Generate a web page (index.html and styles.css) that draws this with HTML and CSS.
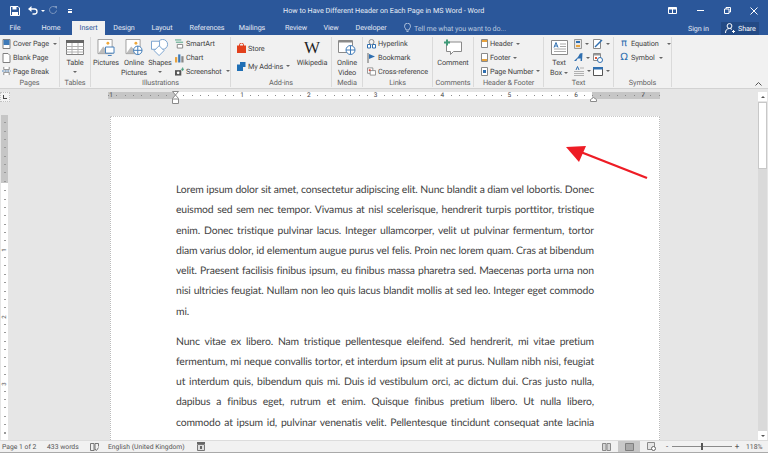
FILE: index.html
```html
<!DOCTYPE html>
<html lang="en">

<head>
    <meta charset="UTF-8">
    <title>How to Have Different Header on Each Page in MS Word - Word</title>
    <link rel="stylesheet" href="styles.css">
</head>

<body>
    <!-- Title bar -->
    <div class="titlebar">
        <div class="qat">
            <svg class="qat-save" width="10" height="10" viewBox="0 0 10 10"><path d="M.5.500h7.500l1.500 1.500v7.500h-9z" fill="none" stroke="#fff"/><path d="M2.500 1h4v2.500h-4zM2 6h6v3.500h-6z" fill="#fff"/></svg>
            <svg class="qat-undo" width="10" height="9" viewBox="0 0 10 9"><path d="M1 3h5.500a2.500 2.500 0 0 1 0 5h-2" fill="none" stroke="#fff" stroke-width="1.300"/><path d="M3.500 0v6l-3.500-3z" fill="#fff"/></svg>
            <span class="qat-caret"></span>
            <svg class="qat-redo" width="9" height="9" viewBox="0 0 9 9"><path d="M6.500 1.500a3.500 3.500 0 1 0 1 3" fill="none" stroke="#7d98c0" stroke-width="1"/><path d="M5 0h3v3z" fill="#7d98c0"/></svg>
            <span class="qat-custom"></span>
        </div>
        <div class="doc-title">How to Have Different Header on Each Page in MS Word - Word</div>
        <div class="window-btns">
            <svg class="win-display" width="9" height="7" viewBox="0 0 9 7"><path d="M.5.500h8v6h-8zM4.500.5v6" fill="none" stroke="#fff"/><path d="M.5.500h8v2h-8z" fill="#fff"/></svg>
            <span class="win-min"></span>
            <svg class="win-restore" width="7" height="7" viewBox="0 0 7 7"><path d="M.5 2h4.500v4.500h-4.500zM2 2v-1.500h4.500v4.500h-1.500" fill="none" stroke="#fff"/></svg>
            <svg width="8" height="8" viewBox="0 0 8 8"><path d="M.5.500l7 7M7.500.5l-7 7" stroke="#fff" fill="none"/></svg>
        </div>
    </div>

    <!-- Tabs -->
    <div class="tabs">
        <span class="tab tab-file">File</span>
        <span class="tab tab-home">Home</span>
        <span class="tab tab-active">Insert</span>
        <span class="tab tab-design">Design</span>
        <span class="tab tab-layout">Layout</span>
        <span class="tab tab-refs">References</span>
        <span class="tab tab-mail">Mailings</span>
        <span class="tab tab-review">Review</span>
        <span class="tab tab-view">View</span>
        <span class="tab tab-dev">Developer</span>
        <svg class="bulb" width="7" height="10" viewBox="0 0 7 10"><path d="M2 7c0-1.500-1.500-2-1.500-3.800a3 3 0 0 1 6 0c0 1.800-1.500 2.300-1.500 3.800zM2.500 8.500h2" fill="none" stroke="#c9d5e8" stroke-width=".8"/></svg>
        <span class="tell">Tell me what you want to do...</span>
        <span class="signin">Sign in</span>
        <span class="share">
            <svg width="10" height="10" viewBox="0 0 10 10"><circle cx="4.500" cy="3" r="2.400" fill="none" stroke="#fff"/><path d="M.5 10c0-3 1.500-4.500 4-4.500 1 0 2 .3 2.500 1M7 8.500h3M8.500 7v3" fill="none" stroke="#fff"/></svg>
            Share
        </span>
    </div>

    <!-- Ribbon -->
    <div class="ribbon">
        <div class="group g-pages">
            <div class="group-body">
                <div class="stack stack-pages">
                    <div class="row"><svg width="8" height="10" viewBox="0 0 8 10"><path d="M.5.500h7v9h-7z" fill="#fff" stroke="#7f7f7f"/><path d="M1 1h6v5h-6z" fill="#3e7ab8"/></svg>Cover Page<span class="caret"></span></div>
                    <div class="row"><svg width="8" height="10" viewBox="0 0 8 10"><path d="M.5.500h5l2 2v7h-7z" fill="#fff" stroke="#7f7f7f"/></svg>Blank Page</div>
                    <div class="row"><svg width="10" height="10" viewBox="0 0 10 10"><path d="M2 .5v3h6v-3M2 9.500v-3h6v3" fill="#fff" stroke="#7f7f7f"/><path d="M0 5h10" stroke="#3e7ab8" stroke-dasharray="2 1"/></svg>Page Break</div>
                </div>
            </div>
            <div class="group-label">Pages</div>
        </div>

        <div class="group g-tables">
            <div class="group-body big-wrap">
                <div class="big">
                    <svg width="18" height="15" viewBox="0 0 18 15"><path d="M.5.500h17v14h-17z" fill="#fff" stroke="#7f7f7f"/><path d="M0 0h18v3h-18z" fill="#666"/><path d="M.5 6.500h17M.5 9.500h17M.5 12h17M6 3v11M12 3v11" stroke="#b0b0b0" fill="none"/></svg>
                    <span class="big-text">Table</span>
                    <span class="caret"></span>
                </div>
            </div>
            <div class="group-label">Tables</div>
        </div>

        <div class="group g-illus">
            <div class="group-body big-wrap">
                <div class="big big-pics">
                    <svg width="18" height="18" viewBox="0 0 18 18"><path d="M.5.500h15v15h-15z" fill="#fff" stroke="#9a9a9a"/><circle cx="11" cy="4.500" r="1.500" fill="#f0a83c"/><path d="M1 15l5-7 4 4 2-2 3 5z" fill="#bcbcbc"/><path d="M8.500 8.500h9v6.500h-9z" fill="#fff" stroke="#3e7ab8"/><path d="M11 17.500h4" stroke="#3e7ab8"/></svg>
                    <span class="big-text">Pictures</span>
                </div>
                <div class="big big-online">
                    <svg width="18" height="18" viewBox="0 0 18 18"><path d="M.5.500h15v15h-15z" fill="#fff" stroke="#9a9a9a"/><circle cx="11" cy="4.500" r="1.500" fill="#f0a83c"/><path d="M1 15l5-7 4 4 2-2 3 5z" fill="#bcbcbc"/><circle cx="13" cy="12" r="4.500" fill="#fff" stroke="#3e7ab8"/><path d="M8.500 12h9M13 7.500v9" stroke="#3e7ab8"/></svg>
                    <span class="big-text">Online</span>
                    <span class="big-text">Pictures</span>
                </div>
                <div class="big big-shapes">
                    <svg width="20" height="19" viewBox="0 0 20 19"><circle cx="13" cy="6" r="5.500" fill="#fff" stroke="#6f9ccb"/><path d="M.5 2.500h9v9h-9z" fill="#fff" stroke="#6f9ccb"/><path d="M9 7.500l5.500 5.500-5.500 5.500-5.500-5.500z" fill="#fff" stroke="#6f9ccb"/></svg>
                    <span class="big-text">Shapes</span>
                    <span class="caret"></span>
                </div>
                <div class="stack stack-illus">
                    <div class="row"><svg width="10" height="10" viewBox="0 0 10 10"><path d="M0 .5h7M1 3h8" stroke="#3f9a78"/><path d="M2.500 5.500h6v4h-6z" fill="#fff" stroke="#7f7f7f"/></svg>SmartArt</div>
                    <div class="row"><svg width="10" height="10" viewBox="0 0 10 10"><path d="M0 4h2.500v6h-2.500z" fill="#e8a33d"/><path d="M3.500 1h2.500v9h-2.500z" fill="#3e7ab8"/><path d="M7 3h2.500v7h-2.500z" fill="#888"/></svg>Chart</div>
                    <div class="row"><svg width="10" height="9" viewBox="0 0 10 9"><path d="M0 3h7v6h-7z" fill="#555"/><circle cx="3.500" cy="6" r="1.500" fill="#fff"/><path d="M8.500 0v4M6.500 2h4" stroke="#3f9a78"/></svg>Screenshot<span class="caret"></span></div>
                </div>
            </div>
            <div class="group-label">Illustrations</div>
        </div>

        <div class="group g-addins">
            <div class="group-body">
                <div class="stack stack-addins">
                    <div class="row"><svg width="9" height="10" viewBox="0 0 9 10"><path d="M0 2.500h9v7.500h-9z" fill="#e2401c"/><path d="M2.500 3v-1.200a2 1.800 0 0 1 4 0v1.200" fill="none" stroke="#e2401c"/></svg>Store</div>
                    <div class="row"><svg width="9" height="10" viewBox="0 0 9 10"><path d="M0 3.500h6v6.500h-6z" fill="#1f6fb5"/><path d="M3 1h5.500v5h-5.500z" fill="#1f6fb5"/></svg>My Add-ins<span class="caret caret-far"></span></div>
                </div>
                <div class="big big-wiki">
                    <span class="wiki-w">W</span>
                    <span class="big-text">Wikipedia</span>
                </div>
            </div>
            <div class="group-label">Add-ins</div>
        </div>

        <div class="group g-media">
            <div class="group-body big-wrap">
                <div class="big">
                    <svg width="18" height="17" viewBox="0 0 18 17"><path d="M.5 1.500h14v12h-14z" fill="#fff" stroke="#8a8a8a"/><path d="M1 1h13v2.500h-13z" fill="#8a8a8a"/><circle cx="12.500" cy="11" r="4.500" fill="#fff" stroke="#3e7ab8"/><path d="M8 11h9M12.500 6.500v9" stroke="#3e7ab8"/></svg>
                    <span class="big-text">Online</span>
                    <span class="big-text">Video</span>
                </div>
            </div>
            <div class="group-label">Media</div>
        </div>

        <div class="group g-links">
            <div class="group-body">
                <div class="stack stack-links">
                    <div class="row"><svg width="9" height="10" viewBox="0 0 9 10"><circle cx="4.500" cy="3" r="2.500" fill="none" stroke="#8a8a8a"/><path d="M.5 5.500h3v3.500h-3zM5.500 5.500h3v3.500h-3z" fill="#fff" stroke="#2f6fb0"/></svg>Hyperlink</div>
                    <div class="row"><svg width="9" height="10" viewBox="0 0 9 10"><path d="M1 0v10" stroke="#666"/><path d="M2 1l6 2.500-6 2.500z" fill="#2f6fb0"/></svg>Bookmark</div>
                    <div class="row"><svg width="10" height="9" viewBox="0 0 10 9"><path d="M.5.500h6v6h-6z" fill="#fff" stroke="#8a8a8a"/><path d="M3.500 3.500h6v5h-6z" fill="#fff" stroke="#8a8a8a"/><path d="M2 2h2v2h-2z" fill="#d9483b"/></svg>Cross-reference</div>
                </div>
            </div>
            <div class="group-label">Links</div>
        </div>

        <div class="group g-comments">
            <div class="group-body big-wrap">
                <div class="big">
                    <svg width="18" height="16" viewBox="0 0 18 16"><path d="M2.500 2.500h15v9.500h-8l-3 3v-3h-4z" fill="#fff" stroke="#8a8a8a"/><path d="M0 3h6M3 0v6" stroke="#3f9a78" stroke-width="2"/></svg>
                    <span class="big-text">Comment</span>
                </div>
            </div>
            <div class="group-label">Comments</div>
        </div>

        <div class="group g-hf">
            <div class="group-body">
                <div class="stack stack-hf">
                    <div class="row"><svg width="7" height="9" viewBox="0 0 7 9"><path d="M.5.500h6v8h-6z" fill="#fff" stroke="#8a8a8a"/><path d="M1 1h5v2h-5z" fill="#e8a33d"/></svg>Header<span class="caret"></span></div>
                    <div class="row"><svg width="7" height="9" viewBox="0 0 7 9"><path d="M.5.500h6v8h-6z" fill="#fff" stroke="#8a8a8a"/><path d="M1 6h5v2h-5z" fill="#e8a33d"/></svg>Footer<span class="caret"></span></div>
                    <div class="row"><svg width="7" height="9" viewBox="0 0 7 9"><path d="M.5.500h6v8h-6z" fill="#fff" stroke="#8a8a8a"/><path d="M2 3h3v3h-3z" fill="#2f6fb0"/></svg>Page Number<span class="caret"></span></div>
                </div>
            </div>
            <div class="group-label">Header &amp; Footer</div>
        </div>

        <div class="group g-text">
            <div class="group-body">
                <div class="big big-textbox">
                    <svg width="17" height="15" viewBox="0 0 17 15"><path d="M.5.500h16v14h-16z" fill="#fff" stroke="#8a8a8a"/><path d="M9 4h6M9 6.500h6M3 9h12M3 11.500h12" stroke="#a8a8a8"/><path d="M3 7.500l2-5 2 5M3.800 6h2.400" fill="none" stroke="#2f6fb0"/></svg>
                    <span class="big-text">Text</span>
                    <span class="big-text">Box<span class="caret"></span></span>
                </div>
                <div class="text-tools">
                    <div class="tool"><svg width="8" height="10" viewBox="0 0 8 10"><path d="M.5.500h7v9h-7z" fill="#e6e6e6" stroke="#999"/><path d="M2 2h4v2h-4z" fill="#2f6fb0"/><path d="M2 6h4v2h-4z" fill="#e8a33d"/></svg><span class="caret"></span></div>
                    <div class="tool"><svg width="10" height="10" viewBox="0 0 10 10"><path d="M.5.500h7v9h-7z" fill="#fff" stroke="#8a8a8a"/><path d="M2 8l7-7" stroke="#2f6fb0" stroke-width="1.500"/></svg><span class="caret"></span></div>
                    <div class="tool"><svg width="9" height="9" viewBox="0 0 9 9"><path d="M0 8l4-4 2-3.500 2.500-.5-.5 8-1.500 0 .2-2.500-3 0-1.500 2.500z" fill="#2f6fb0"/></svg><span class="caret"></span></div>
                    <div class="tool"><svg width="10" height="10" viewBox="0 0 10 10"><path d="M.5.500h7v7h-7z" fill="#fff" stroke="#8a8a8a"/><path d="M1 1h6v1.500h-6z" fill="#999"/><path d="M2 4h2v2h-2z" fill="#d9583b"/><circle cx="7" cy="7" r="2.500" fill="#fff" stroke="#2f6fb0"/></svg></div>
                    <div class="tool"><svg width="10" height="10" viewBox="0 0 10 10"><path d="M2 4l1.500-3.500 1.500 3.500" fill="none" stroke="#2f6fb0"/><path d="M6 2h4M0 5.500h10M0 7.500h10M0 9.500h10" stroke="#b0b0b0"/></svg><span class="caret"></span></div>
                    <div class="tool"><svg width="10" height="9" viewBox="0 0 10 9"><path d="M.5.500h9v8h-9z" fill="#fff" stroke="#555"/><path d="M0 0h10v2.500h-10z" fill="#2f6fb0"/></svg><span class="caret"></span></div>
                </div>
            </div>
            <div class="group-label">Text</div>
        </div>

        <div class="group g-symbols">
            <div class="group-body">
                <div class="stack stack-symbols">
                    <div class="row"><span class="sym">π</span>Equation<span class="caret caret-eq"></span></div>
                    <div class="row"><span class="sym">Ω</span>Symbol<span class="caret"></span></div>
                </div>
            </div>
            <div class="group-label">Symbols</div>
        </div>

        <svg class="collapse" width="7" height="4" viewBox="0 0 7 4"><path d="M.5 3.500l3-3 3 3" fill="none" stroke="#555"/></svg>
    </div>

    <!-- Document area -->
    <div class="workspace">
        <div class="v-side">
            <div class="tab-stop"><span></span></div>
            <div class="v-ruler">
                <div class="v-dark"></div>
                <div class="v-white">
                    <span>1</span><span>2</span><span>3</span>
                </div>
            </div>
        </div>

        <div class="doc-col">
            <div class="h-ruler">
                <div class="r-dark r-left"><span>1</span></div>
                <div class="r-white">
                    <span>1</span><span>2</span><span>3</span><span>4</span><span>5</span><span>6</span>
                </div>
                <div class="r-dark r-right"><span>7</span></div>
                <svg class="indent-left" width="7" height="13" viewBox="0 0 7 13"><path d="M.5.500h6l-3 3.500 3 3.500v5h-6v-5l3-3.500z" fill="#fff" stroke="#8a8a8a"/><path d="M.5 8h6" stroke="#8a8a8a"/></svg>
                <svg class="indent-right" width="7" height="5" viewBox="0 0 7 5"><path d="M.5 4.500v-2l3-2 3 2v2z" fill="#fff" stroke="#8a8a8a"/></svg>
            </div>
            <div class="page">
                <p>
                    <span class="line">Lorem ipsum dolor sit amet, consectetur adipiscing elit. Nunc blandit a diam vel lobortis. Donec</span>
                    <span class="line">euismod sed sem nec tempor. Vivamus at nisl scelerisque, hendrerit turpis porttitor, tristique</span>
                    <span class="line">enim. Donec tristique pulvinar lacus. Integer ullamcorper, velit ut pulvinar fermentum, tortor</span>
                    <span class="line">diam varius dolor, id elementum augue purus vel felis. Proin nec lorem quam. Cras at bibendum</span>
                    <span class="line">velit. Praesent facilisis finibus ipsum, eu finibus massa pharetra sed. Maecenas porta urna non</span>
                    <span class="line">nisi ultricies feugiat. Nullam non leo quis lacus blandit mollis at sed leo. Integer eget commodo</span>
                    <span class="line line-end">mi.</span>
                </p>
                <p>
                    <span class="line">Nunc vitae ex libero. Nam tristique pellentesque eleifend. Sed hendrerit, mi vitae pretium</span>
                    <span class="line">fermentum, mi neque convallis tortor, et interdum ipsum elit at purus. Nullam nibh nisi, feugiat</span>
                    <span class="line">ut interdum quis, bibendum quis mi. Duis id vestibulum orci, ac dictum dui. Cras justo nulla,</span>
                    <span class="line">dapibus a finibus eget, rutrum et enim. Quisque finibus pretium libero. Ut nulla libero,</span>
                    <span class="line">commodo at ipsum id, pulvinar venenatis velit. Pellentesque tincidunt consequat ante lacinia</span>
                </p>
                <svg class="arrow" width="84" height="34" viewBox="0 0 84 34"><path d="M81 32l-65-25.500" stroke="#ee1c25" stroke-width="2.400" fill="none"/><path d="M0 1l20-1-7 16z" fill="#ee1c25"/></svg>
            </div>
        </div>

        <div class="scrollbar">
            <div class="sb-btn"><span class="sb-up"></span></div>
            <div class="sb-thumb"></div>
            <div class="sb-track"></div>
            <div class="sb-btn"><span class="sb-down"></span></div>
        </div>
    </div>

    <!-- Status bar -->
    <div class="statusbar">
        <span class="st-page">Page 1 of 2</span>
        <span class="st-words">433 words</span>
        <svg class="st-proof" width="9" height="8" viewBox="0 0 9 8"><path d="M.5.500h3.500v7h-3.500zM5 .5h3.500v3M5 7.500v-7" fill="none" stroke="#777"/><path d="M5 6l1.500 1.500 2-3" fill="none" stroke="#777"/></svg>
        <span class="st-lang">English (United Kingdom)</span>
        <svg class="st-macro" width="8" height="9" viewBox="0 0 8 9"><path d="M.5 2.500h7v6h-7z" fill="#ddd" stroke="#777"/><path d="M0 0h8v2h-8z" fill="#666"/><path d="M3 4h2v3h-2z" fill="#666"/></svg>
        <div class="st-right">
            <svg class="view-read" width="9" height="8" viewBox="0 0 9 8"><path d="M.5.500h3.500v7h-3.500zM5 .5h3.500v7h-3.500z" fill="#d5d5d5" stroke="#8a8a8a"/></svg>
            <span class="view-print"><svg width="9" height="8" viewBox="0 0 9 8"><path d="M.5.500h8v7h-8z" fill="#a9a9a9" stroke="#7f7f7f"/></svg></span>
            <svg class="view-web" width="9" height="9" viewBox="0 0 9 9"><path d="M.5.500h7v7h-7z" fill="#e6e6e6" stroke="#8a8a8a"/><circle cx="6.500" cy="6.500" r="2" fill="#fff" stroke="#666"/></svg>
            <span class="zoom-btn">-</span>
            <div class="slider"><span class="slider-thumb"></span></div>
            <span class="zoom-btn">+</span>
            <span class="zoom-pct">118%</span>
        </div>
    </div>
</body>

</html>
```
FILE: styles.css
```css
* {
    box-sizing: border-box;
}

html,
body {
    margin: 0;
    padding: 0;
    width: 768px;
    height: 454px;
    overflow: hidden;
}

body {
    display: flex;
    flex-direction: column;
    font-family: "Roboto", sans-serif;
    font-size: 7.3px;
    letter-spacing: -.1px;
    text-rendering: geometricPrecision;
    color: #444;
    background-color: #fff;
}

svg {
    display: block;
    flex: none;
}

/* title bar */
.titlebar {
    height: 21px;
    flex: none;
    display: flex;
    align-items: center;
    background-color: #2b579a;
    color: #fff;
}

.qat {
    width: 283px;
    height: 100%;
    display: flex;
    align-items: center;
    padding-left: 10px;
}

.qat-undo {
    margin-left: 8px;
}

.qat-caret {
    margin-left: 3px;
    border: 2px solid transparent;
    border-top-color: #fff;
    margin-top: 2px;
}

.qat-redo {
    margin-left: 4px;
}

.qat-custom {
    margin-left: 10px;
    width: 4px;
    height: 4px;
    border-top: 1px solid #fff;
    border-bottom: 2px solid #fff;
}

.doc-title {
    width: 200px;
    text-align: center;
    white-space: nowrap;
    font-size: 7.2px;
    letter-spacing: 0;
    color: #e8eef6;
}

.window-btns {
    flex: 1;
    display: flex;
    align-items: center;
    padding-left: 185px;
}

.win-display {
    margin-right: 19.5px;
}

.win-min {
    width: 7px;
    height: 1px;
    background-color: #fff;
    margin-right: 20px;
}

.win-restore {
    margin-right: 19.5px;
}

/* tabs */
.tabs {
    height: 14px;
    flex: none;
    display: flex;
    align-items: center;
    background-color: #2b579a;
    color: #e4eaf4;
    font-size: 7.2px;
    white-space: nowrap;
}

.tab {
    display: block;
    text-align: center;
    line-height: 14px;
}

.tab-file { width: 30px; }
.tab-home { width: 42px; }
.tab-active {
    width: 33px;
    background-color: #f1f1f1;
    color: #2b579a;
}
.tab-design { width: 38px; }
.tab-layout { width: 38px; }
.tab-refs { width: 52px; }
.tab-mail { width: 38px; }
.tab-review { width: 50px; }
.tab-view { width: 20px; }
.tab-dev { width: 60px; }

.bulb {
    margin-left: 3px;
}

.tell {
    margin-left: 3px;
    width: 274px;
    color: #b9c8df;
}

.signin {
    width: 33px;
}

.share {
    width: 38px;
    height: 13px;
    display: flex;
    align-items: center;
    gap: 3px;
    padding-left: 4px;
    background-color: #234a85;
    color: #fff;
}

/* ribbon */
.ribbon {
    height: 54px;
    flex: none;
    position: relative;
    display: flex;
    background-color: #f1f1f1;
    border-bottom: 1px solid #d2d2d2;
}

.group {
    flex: none;
    display: flex;
    flex-direction: column;
    padding: 2px 0 1px;
}

.group-body {
    flex: 1;
    display: flex;
    border-right: 1px solid #dadada;
    min-height: 0;
}

.group-label {
    height: 10px;
    line-height: 12px;
    text-align: center;
    color: #666;
    border-right: 1px solid #dadada;
    white-space: nowrap;
}

.g-pages { width: 60px; }
.g-tables { width: 31px; }
.g-illus { width: 140px; }
.g-addins { width: 101px; }
.g-media { width: 31px; }
.g-links { width: 70px; }
.g-comments { width: 41px; }
.g-hf { width: 70px; }
.g-text { width: 70px; }
.g-symbols { width: 58px; }

.stack {
    display: flex;
    flex-direction: column;
    padding-left: 3px;
}

.stack-pages {
    padding-left: 2px;
}

.row {
    height: 13.7px;
    flex: none;
    display: flex;
    align-items: center;
    gap: 2px;
    white-space: nowrap;
}

.row svg {
    width: 9px;
}

.caret {
    display: inline-block;
    margin-left: 2px;
    border: 2px solid transparent;
    border-top-color: #666;
    border-bottom: 0;
    vertical-align: middle;
}

.big-wrap {
    justify-content: center;
}

.big {
    display: flex;
    flex-direction: column;
    align-items: center;
    padding-top: 1px;
    white-space: nowrap;
}

.big svg {
    height: 20px;
    padding: 1px 0 2px;
}

.big-text {
    height: 10px;
    flex: none;
    line-height: 10px;
}

.big > .caret {
    flex: none;
    margin: 3px 0 0;
}

.g-illus .group-body {
    justify-content: flex-start;
}

.big-pics {
    width: 30px;
}

.big-online {
    width: 26px;
}

.big-shapes {
    width: 26px;
}

.stack-illus {
    padding-left: 2px;
}

.stack-addins {
    padding: 2px 0 0 6px;
    width: 66px;
}

.stack-addins .row {
    height: 18px;
}

.caret-far {
    margin-left: 1px;
}

.big-wiki {
    width: 30px;
}

.wiki-w {
    height: 20px;
    line-height: 20px;
    flex: none;
    font-family: "Liberation Serif", serif;
    font-size: 17px;
    color: #222;
}

.stack-links {
    padding-left: 4px;
}

.stack-hf {
    padding-left: 6px;
}

.stack-hf .row {
    gap: 1px;
}

.big-textbox {
    width: 30px;
}

.text-tools {
    display: grid;
    grid-template-columns: 19px 19px;
    grid-auto-rows: 13.7px;
}

.tool {
    display: flex;
    align-items: center;
}

.tool .caret {
    margin-left: 3px;
}

.stack-symbols {
    padding-left: 5px;
}

.sym {
    width: 10px;
    font-family: "DejaVu Sans", sans-serif;
    font-size: 10px;
    color: #2f6fb0;
    text-align: center;
}

.caret-eq {
    margin-left: 6px;
}

.collapse {
    position: absolute;
    left: 755px;
    bottom: 2px;
}

/* document area */
.workspace {
    flex: 1;
    min-height: 0;
    display: flex;
    background-color: #e6e6e6;
}

.v-side {
    width: 108px;
    flex: none;
    padding-top: 3px;
    display: flex;
    flex-direction: column;
}

.tab-stop {
    width: 10px;
    height: 10px;
    background-color: #f3f3f3;
    border: 1px dotted #c2c2c2;
}

.tab-stop span {
    display: block;
    width: 4px;
    height: 4px;
    margin: 2px 0 0 2px;
    border-left: 1px solid #444;
    border-bottom: 1px solid #444;
}

.v-ruler {
    flex: 1;
    margin-top: 13px;
    width: 7px;
    margin-left: 1px;
    display: flex;
    flex-direction: column;
}

.v-dark {
    height: 68px;
    background: repeating-linear-gradient(to bottom, transparent 0, transparent 7.35px, #9a9a9a 7.35px, #9a9a9a 8.35px) center / 2px 100% no-repeat, #c6c6c6;
}

.v-white {
    flex: 1;
    display: flex;
    flex-direction: column;
    gap: 60.8px;
    padding-top: 64px;
    font-size: 6px;
    line-height: 6px;
    color: #555;
    text-align: center;
    background: repeating-linear-gradient(to bottom, transparent 0, transparent 7.35px, #9a9a9a 7.35px, #9a9a9a 8.35px) center / 2px 100% no-repeat, #fff;
}

.v-white span {
    display: block;
    height: 6px;
    background-color: #fff;
    transform: rotate(-90deg);
}

.doc-col {
    width: 552px;
    flex: none;
    display: flex;
    flex-direction: column;
    padding-top: 3px;
}

.h-ruler {
    position: relative;
    height: 7px;
    flex: none;
    display: flex;
    font-size: 6.5px;
    line-height: 7px;
    color: #444;
}

.r-left {
    width: 67px;
    background: repeating-linear-gradient(to right, #8a8a8a 0, #8a8a8a 1px, transparent 1px, transparent 8.35px) center / 100% 1px no-repeat, #c6c6c6;
}

.r-white {
    width: 417px;
    display: flex;
    gap: 60.8px;
    padding-left: 64px;
    background: repeating-linear-gradient(to right, #8a8a8a 0, #8a8a8a 1px, transparent 1px, transparent 8.35px) center / 100% 1px no-repeat, #fff;
}

.r-right {
    flex: 1;
    padding-left: 48px;
    background: repeating-linear-gradient(to right, #8a8a8a 0, #8a8a8a 1px, transparent 1px, transparent 8.35px) center / 100% 1px no-repeat, #c6c6c6;
}

.h-ruler span {
    width: 6px;
    text-align: center;
    display: inline-block;
}

.r-white span {
    background-color: #fff;
}

.indent-left {
    position: absolute;
    left: 64px;
    top: -1px;
}

.indent-right {
    position: absolute;
    left: 482px;
    top: 5px;
}

.page {
    position: relative;
    flex: 1;
    min-height: 0;
    margin: 17px 0 0 2px;
    padding-top: 63px;
    padding-left: 65px;
    padding-right: 65px;
    overflow: hidden;
    background-color: #fff;
    border-top: 1px dotted #c8c8c8;
    border-right: 1px dotted #bbb;
    border-left: 1px dotted #bbb;
    font-family: "Lato", sans-serif;
    font-size: 10.4px;
    letter-spacing: -.15px;
    color: #444;
}

.page p {
    margin: 0 0 9.5px;
}

.line {
    display: block;
    height: 20.3px;
    line-height: 20.3px;
    text-align: justify;
    text-align-last: justify;
}

.line-end {
    text-align-last: left;
}

.arrow {
    position: absolute;
    left: 455px;
    top: 29px;
}

.scrollbar {
    flex: 1;
    padding: 3px 1px 0 98px;
    display: flex;
    flex-direction: column;
}

.sb-btn {
    height: 9px;
    width: 9px;
    flex: none;
    background-color: #fff;
    display: flex;
    align-items: center;
    justify-content: center;
}

.sb-up {
    border: 2px solid transparent;
    border-bottom-color: #555;
    border-top: 0;
}

.sb-down {
    border: 2px solid transparent;
    border-top-color: #555;
    border-bottom: 0;
}

.sb-thumb {
    height: 67px;
    width: 9px;
    margin-top: 1px;
    flex: none;
    background-color: #fff;
    border: 1px solid #c8c8c8;
}

.sb-track {
    flex: 1;
    width: 9px;
    background-color: #dadada;
}

/* status bar */
.statusbar {
    height: 13px;
    flex: none;
    display: flex;
    align-items: center;
    background-color: #f1f1f1;
    border-top: 1px solid #dcdcdc;
    border-bottom: 1px solid #a9a9a9;
    margin-bottom: 1px;
    font-size: 6.8px;
    letter-spacing: 0;
    color: #555;
    white-space: nowrap;
}

.st-page {
    margin-left: 2px;
    width: 45px;
}

.st-words {
    width: 43px;
}

.st-lang {
    margin-left: 9px;
    width: 89px;
}

.st-right {
    flex: 1;
    display: flex;
    align-items: center;
    padding-left: 397px;
}

.view-print {
    width: 22px;
    height: 11px;
    margin-left: 7px;
    display: flex;
    align-items: center;
    justify-content: center;
    background-color: #c8c8c8;
}

.view-web {
    margin: 0 8px 0 7px;
}

.zoom-btn {
    width: 6px;
    text-align: center;
    font-size: 8px;
    line-height: 8px;
}

.slider {
    position: relative;
    width: 60px;
    height: 1px;
    margin: 0 2px;
    background-color: #8a8a8a;
}

.slider-thumb {
    position: absolute;
    left: 29px;
    top: -3px;
    width: 2px;
    height: 7px;
    background-color: #555;
}

.zoom-pct {
    margin-left: 6px;
}
```
